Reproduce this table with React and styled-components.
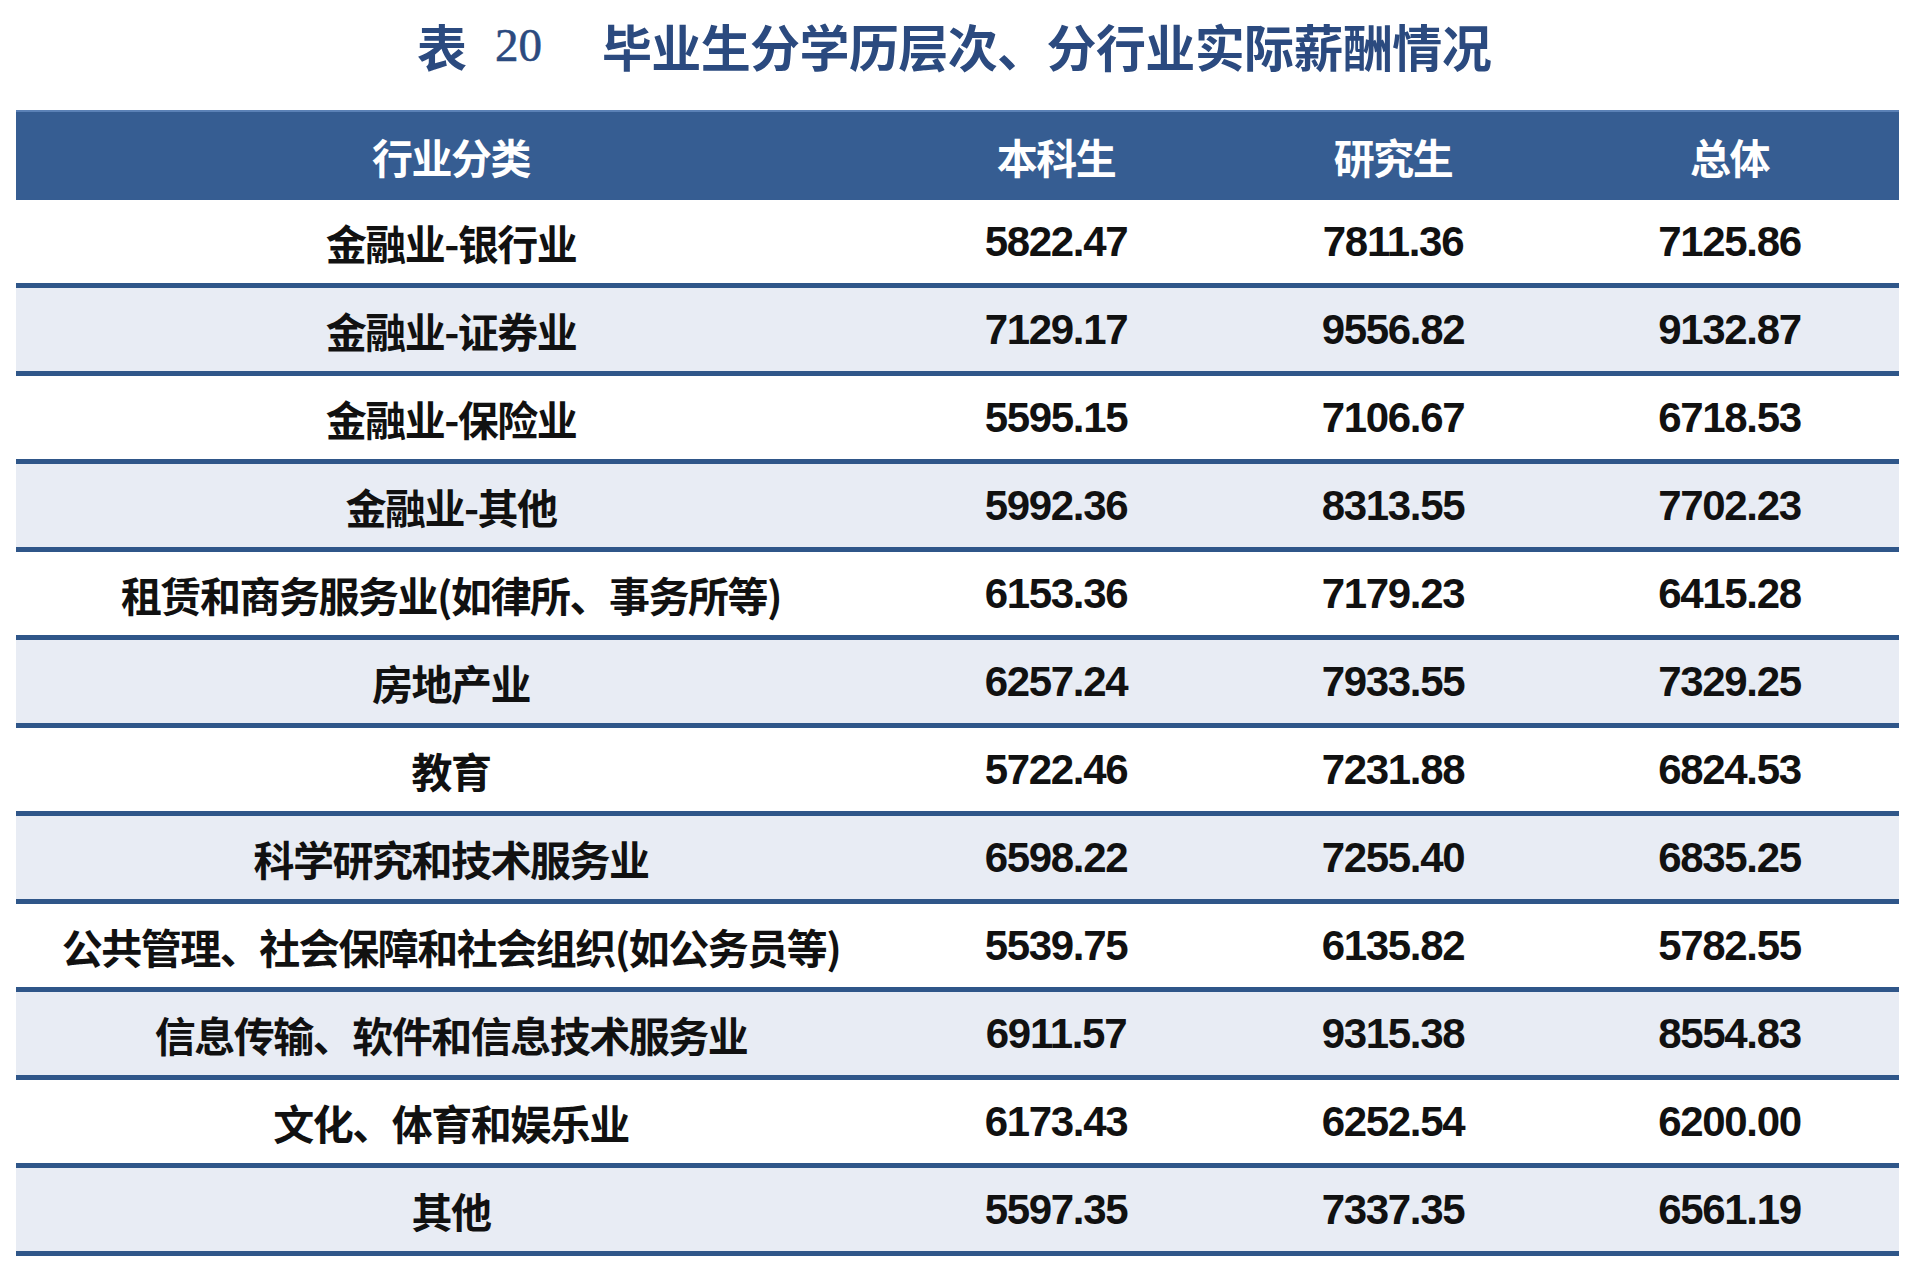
import React from "react"
import styled, { createGlobalStyle } from "styled-components"

const rows = [
  ["金融业-银行业", "5822.47", "7811.36", "7125.86"],
  ["金融业-证券业", "7129.17", "9556.82", "9132.87"],
  ["金融业-保险业", "5595.15", "7106.67", "6718.53"],
  ["金融业-其他", "5992.36", "8313.55", "7702.23"],
  ["租赁和商务服务业(如律所、事务所等)", "6153.36", "7179.23", "6415.28"],
  ["房地产业", "6257.24", "7933.55", "7329.25"],
  ["教育", "5722.46", "7231.88", "6824.53"],
  ["科学研究和技术服务业", "6598.22", "7255.40", "6835.25"],
  ["公共管理、社会保障和社会组织(如公务员等)", "5539.75", "6135.82", "5782.55"],
  ["信息传输、软件和信息技术服务业", "6911.57", "9315.38", "8554.83"],
  ["文化、体育和娱乐业", "6173.43", "6252.54", "6200.00"],
  ["其他", "5597.35", "7337.35", "6561.19"],
]

const headers = ["行业分类", "本科生", "研究生", "总体"]

const GlobalStyle = createGlobalStyle`
  html, body {
    margin: 0;
    padding: 0;
    background: #ffffff;
  }
  body {
    font-family: "Noto Sans CJK SC", "Noto Sans", sans-serif;
  }
`

const Page = styled.div`
  width: 1920px;
  height: 1265px;
  overflow: hidden;
  display: flex;
  flex-direction: column;
`

const Title = styled.h1`
  margin: 0;
  height: 110px;
  display: flex;
  align-items: center;
  justify-content: center;
  padding-right: 12px;
  padding-bottom: 20px;
  box-sizing: border-box;
  color: #2b4a7f;
  font-weight: 700;
`

const TitleCjk = styled.span`
  font-family: "Noto Sans CJK SC", sans-serif;
  font-size: 50px;
  letter-spacing: ${p => p.$spacing || "0px"};
  margin-left: ${p => p.$gap || "0px"};
`

const TitleNum = styled.span`
  font-family: "Liberation Serif", serif;
  font-weight: 400;
  font-size: 47px;
  margin-left: 28px;
  -webkit-text-stroke: 0.6px #2b4a7f;
`

const Table = styled.div`
  margin: 0 21px 0 16px;
`

const Row = styled.div`
  display: grid;
  grid-template-columns: 870px 340px 334px 1fr;
  height: ${p => (p.$head ? "90px" : "88px")};
  box-sizing: border-box;
  background: ${p => (p.$head ? "#365d92" : p.$alt ? "#e8ecf4" : "#ffffff")};
  border-top: ${p => (p.$head ? "2px solid #5b81b6" : "none")};
  border-bottom: ${p => (p.$head ? "none" : "5px solid #2f5689")};
`

const Cell = styled.div`
  display: flex;
  align-items: center;
  justify-content: center;
  font-weight: 700;
  color: ${p => (p.$head ? "#ffffff" : "#111111")};
  font-size: 41px;
  letter-spacing: -1.5px;
  white-space: nowrap;
  padding-top: ${p => (p.$head ? "0px" : "1px")};
`

const Num = styled(Cell)`
  font-family: "Liberation Sans", Arial, sans-serif;
  font-size: 42px;
  letter-spacing: -1.3px;
`

export default function App() {
  return (
    <Page>
      <GlobalStyle />
      <Title>
        <TitleCjk>表</TitleCjk>
        <TitleNum>20</TitleNum>
        <TitleCjk $gap="60px" $spacing="-0.6px">毕业生分学历层次、分行业实际薪酬情况</TitleCjk>
      </Title>
      <Table>
        <Row $head>
          {headers.map(h => (
            <Cell $head key={h}>{h}</Cell>
          ))}
        </Row>
        {rows.map((r, i) => (
          <Row key={r[0]} $alt={i % 2 === 1}>
            <Cell>{r[0]}</Cell>
            <Num>{r[1]}</Num>
            <Num>{r[2]}</Num>
            <Num>{r[3]}</Num>
          </Row>
        ))}
      </Table>
    </Page>
  )
}
